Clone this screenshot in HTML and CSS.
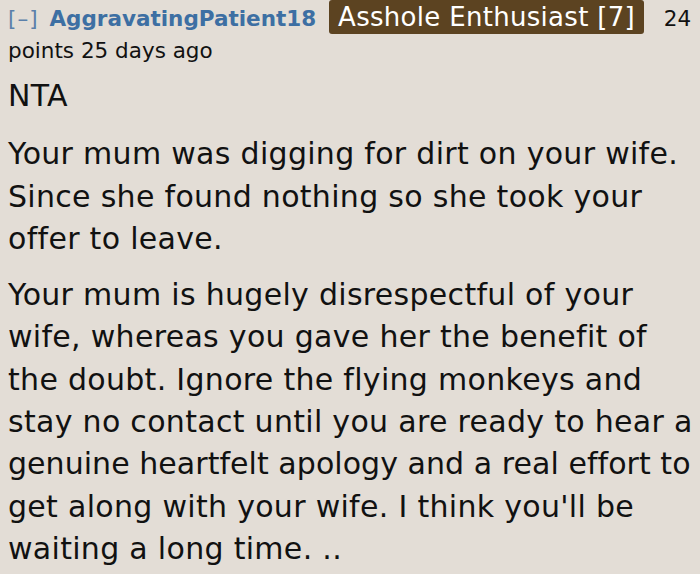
FILE: index.html
```html
<!DOCTYPE html>
<html>
<head>
<meta charset="utf-8">
<link rel="stylesheet" href="styles.css">
</head>
<body>
<div class="comment">
  <p class="tagline"><span class="expand">[–]</span> <span class="author">AggravatingPatient18</span> <span class="flair">Asshole Enthusiast [7]</span> <span class="score">24 points</span> <span class="time">25 days ago</span></p>
  <div class="md">
    <p class="verdict">NTA</p>
    <p class="first">Your mum was digging for dirt on your wife. Since she found nothing so she took your offer to leave.</p>
    <p>Your mum is hugely disrespectful of your wife, whereas you gave her the benefit of the doubt. Ignore the flying monkeys and stay no contact until you are ready to hear a <span class="fit">genuine heartfelt apology and a real effort to</span> get along with your wife. I think you'll be waiting a long time. ..</p>
  </div>
</div>
</body>
</html>
```

FILE: styles.css
```css
html, body {
  margin: 0;
  padding: 0;
  background: #e3ddd6;
  overflow: hidden;
}
body {
  font-family: "DejaVu Sans", Verdana, sans-serif;
  color: #111;
}
.comment {
  padding: 1px 0 0 8px;
}
.tagline {
  margin: 0;
  font-size: 21.5px;
  line-height: 32px;
}
.expand {
  color: #5b80aa;
  letter-spacing: 1px;
  margin-right: 4px;
}
.author {
  color: #3d6fa3;
  font-weight: bold;
  margin-right: 6px;
}
.flair {
  background: #5c4321;
  color: #fff;
  border-radius: 3px;
  padding: 2px 9px;
  font-size: 26px;
  letter-spacing: 0.3px;
  margin-right: 13px;
}
.md {
  font-size: 30px;
  line-height: 42.3px;
  letter-spacing: 0.3px;
}
.md p {
  margin: 14px 0 0 0;
}
.md .verdict {
  margin-top: 8px;
}
.md .first {
  margin-top: 16px;
}
.fit {
  letter-spacing: 0.05px;
}
```
